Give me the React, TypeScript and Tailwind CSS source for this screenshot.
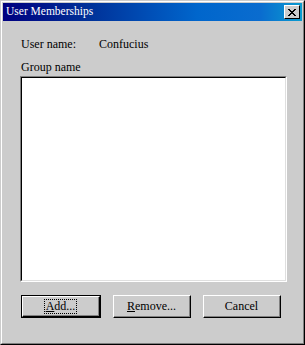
import React from 'react';

const FONT = { fontFamily: '"Liberation Serif", "Times New Roman", serif' };

function Btn({ accel, rest, isDefault }: { accel: string; rest: string; isDefault?: boolean }) {
  return (
    <div className={isDefault ? 'border border-black' : ''}>
      <div className="border-t border-l border-white border-b border-r border-b-black border-r-black">
        <div className={`border-b border-r border-[#808080] border-t-transparent border-l-transparent flex items-center justify-center bg-[#cccccc] w-[76px] ${isDefault ? 'h-[19px]' : 'h-[21px]'}`}>
          <span
            className={`text-[12px] leading-[13px] px-[1px] ${isDefault ? 'outline outline-1 outline-dotted outline-black' : ''}`}
            style={FONT}
          >
            <span className="underline underline-offset-1">{accel}</span>
            {rest}
          </span>
        </div>
      </div>
    </div>
  );
}

export default function App() {
  return (
    <div className="w-[305px] h-[345px] bg-[#cccccc] text-black" style={FONT}>
      <div className="h-full border-t border-l border-[#cccccc] border-b border-r border-b-black border-r-black">
        <div className="h-full border-t border-l border-white border-b border-r border-b-[#808080] border-r-[#808080] p-[1px] flex flex-col">
          {/* title bar */}
          <div className="h-[18px] flex items-center justify-between pl-[3px] pr-[2px] bg-[linear-gradient(90deg,#000080_0%,#001f8f_18%,#00339a_30%,#0050b8_50%,#0066cc_65%,#0a6ccf_86%,#0a9cd0_100%)]">
            <span className="text-white text-[11.5px] leading-none" style={FONT}>User Memberships</span>
            <div className="w-[16px] h-[14px] bg-[#cccccc] border-t border-l border-white border-b border-r border-b-black border-r-black flex items-center justify-center">
              <svg width="8" height="7" viewBox="0 0 8 7" shapeRendering="crispEdges">
                <path d="M0 0h2v1H0zM6 0h2v1H6zM1 1h2v1H1zM5 1h2v1H5zM2 2h4v1H2zM3 3h2v1H3zM2 4h4v1H2zM1 5h2v1H1zM5 5h2v1H5zM0 6h2v1H0zM6 6h2v1H6z" fill="#000" />
              </svg>
            </div>
          </div>

          <div className="flex-1 flex flex-col pl-[17px] pt-[17px]">
            <div className="flex text-[12px] leading-none h-[13px] pl-[1px]" style={FONT}>
              <span className="w-[78px]">User name:</span>
              <span>Confucius</span>
            </div>
            <div className="text-[12px] leading-none mt-[10px] pl-[1px] h-[13px]" style={FONT}>Group name</div>
            <div className="mt-[2px] w-[267px] h-[206px] border-t border-l border-[#808080] border-b border-r border-b-white border-r-white">
              <div className="h-full border-t border-l border-black border-b border-r border-b-[#dfdfdf] border-r-[#dfdfdf] bg-white" />
            </div>
            <div className="mt-[13px] flex gap-[12px] pl-[1px]">
              <Btn accel="A" rest="dd..." isDefault />
              <Btn accel="R" rest="emove..." />
              <Btn accel="" rest="Cancel" />
            </div>
          </div>
        </div>
      </div>
    </div>
  );
}
